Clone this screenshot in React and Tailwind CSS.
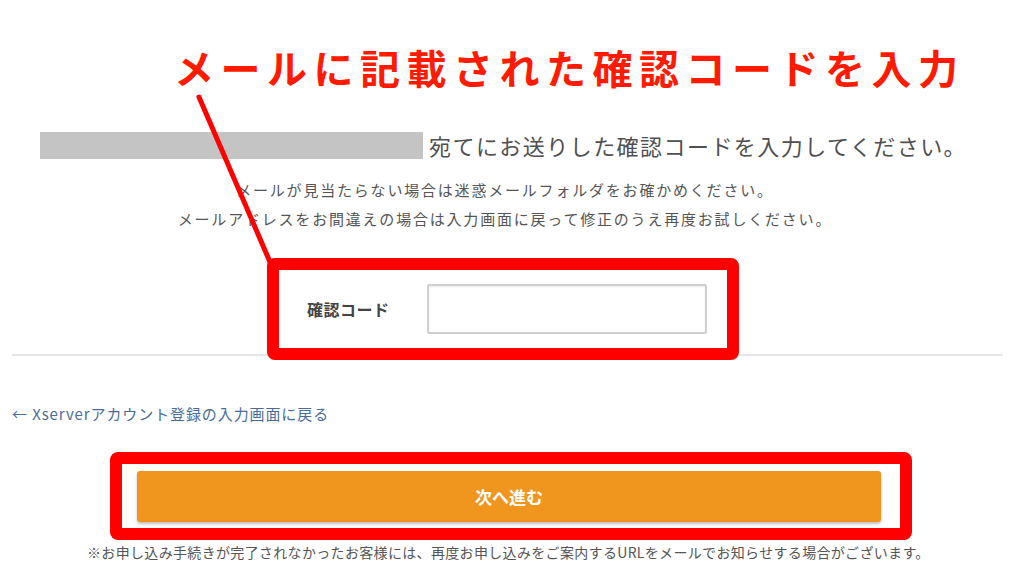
import React from "react";

export default function App() {
  return (
    <div
      className="relative w-[1024px] h-[576px] overflow-hidden bg-white"
      style={{ fontFamily: '"Noto Sans CJK JP", "Noto Sans", sans-serif' }}
    >
      <div className="flex flex-col pt-[47px]">
        {/* Annotation title */}
        <div className="h-[40px] pl-[174px] text-[40px] leading-[40px] font-bold tracking-[6.5px] text-[#ff1a00] whitespace-nowrap">
          メールに記載された確認コードを入力
        </div>

        {/* Masked address + message */}
        <div className="mt-[45px] flex h-[27px] items-center pl-[40px]">
          <div className="h-[27px] w-[383px] bg-[#c4c4c4]" />
          <div className="ml-[6px] text-[22px] leading-[27px] tracking-[1.45px] text-[#505050] whitespace-nowrap">
            宛てにお送りした確認コードを入力してください。
          </div>
        </div>

        <div className="mt-[16px] w-[1010px] text-center text-[15px] leading-[29px] tracking-[1.8px] text-[#555]">
          <div>メールが見当たらない場合は迷惑メールフォルダをお確かめください。</div>
          <div>メールアドレスをお間違えの場合は入力画面に戻って修正のうえ再度お試しください。</div>
        </div>

        {/* Code input with annotation frame */}
        <div className="relative z-10 mt-[25px] ml-[267px] flex h-[102px] w-[472px] items-center rounded-[8px] border-[12px] border-[#ff0000] bg-white">
          <div className="ml-[28px] w-[120px] text-[16px] font-bold tracking-[0.5px] text-[#444]">確認コード</div>
          <div className="h-[50px] w-[280px] rounded-[2px] border-2 border-[#cfcfcf] bg-white shadow-[inset_0_1px_2px_rgba(0,0,0,0.08)]" />
        </div>

        <div className="-mt-[6px] ml-[12px] mr-[21px] h-[2px] bg-[#e6e6e6]" />

        {/* Back link */}
        <div className="mt-[48px] pl-[12px] text-[15px] leading-[20px] tracking-[0.9px] text-[#4a6c9b] whitespace-nowrap">
          ← Xserverアカウント登録の入力画面に戻る
        </div>

        {/* Next button with annotation frame */}
        <div className="mt-[28px] ml-[110px] h-[88px] w-[802px] rounded-[8px] border-[12px] border-[#ff0000] pt-[7px] pl-[15px] pr-[19px]">
          <div className="flex h-[51px] w-full items-center justify-center rounded-[3px] bg-[#f0961e] text-[17px] font-bold text-white shadow-[0_2px_3px_rgba(0,0,0,0.25)]">
            次へ進む
          </div>
        </div>

        <div className="mt-[2px] pl-[87px] text-[14px] leading-[20px] tracking-[0.33px] text-[#555] whitespace-nowrap">
          ※お申し込み手続きが完了されなかったお客様には、再度お申し込みをご案内するURLをメールでお知らせする場合がございます。
        </div>
      </div>

      {/* Annotation pointer line */}
      <svg className="absolute left-0 top-0 z-20" width="1024" height="576" viewBox="0 0 1024 576">
        <line x1="199" y1="97" x2="270" y2="262" stroke="#ff0000" strokeWidth="5" strokeLinecap="round" />
      </svg>
    </div>
  );
}
